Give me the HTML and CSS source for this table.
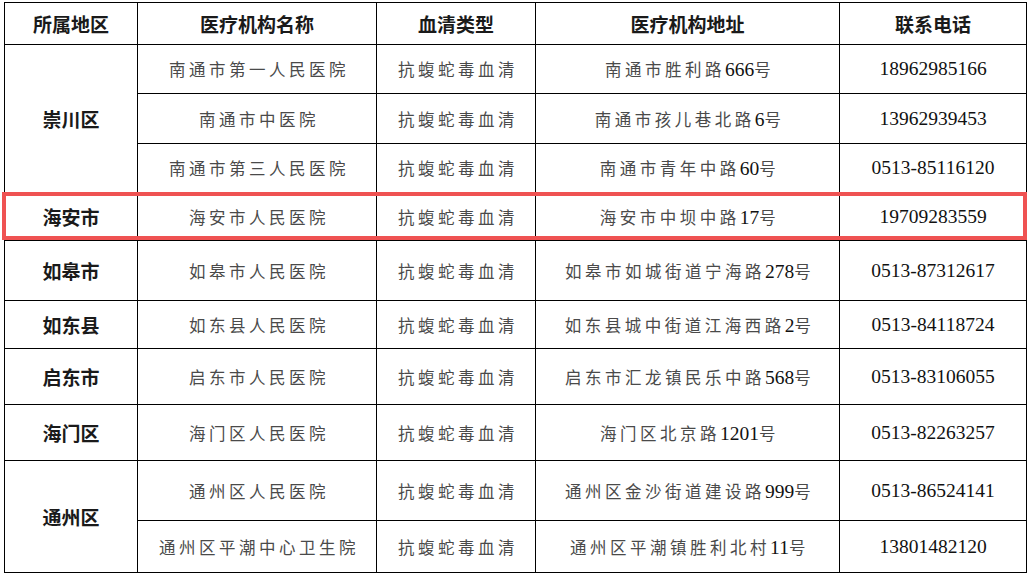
FILE: index.html
```html
<!DOCTYPE html>
<html lang="zh">
<head>
<meta charset="utf-8">
<link rel="stylesheet" href="styles.css">
</head>
<body>
<div class="wrap">
<table class="grid">
  <colgroup>
    <col class="c1"><col class="c2"><col class="c3"><col class="c4"><col class="c5">
  </colgroup>
  <thead>
    <tr class="h-head">
      <th>所属地区</th><th>医疗机构名称</th><th>血清类型</th><th>医疗机构地址</th><th class="tel">联系电话</th>
    </tr>
  </thead>
  <tbody>
    <tr class="h49">
      <td class="area" rowspan="3">崇川区</td>
      <td class="cn">南通市第一人民医院</td><td class="cn">抗蝮蛇毒血清</td><td class="cn">南通市胜利路<span class="num">666</span>号</td><td class="tel num">18962985166</td>
    </tr>
    <tr class="h50">
      <td class="cn">南通市中医院</td><td class="cn">抗蝮蛇毒血清</td><td class="cn">南通市孩儿巷北路<span class="num">6</span>号</td><td class="tel num">13962939453</td>
    </tr>
    <tr class="h49">
      <td class="cn">南通市第三人民医院</td><td class="cn">抗蝮蛇毒血清</td><td class="cn">南通市青年中路<span class="num">60</span>号</td><td class="tel num">0513-85116120</td>
    </tr>
    <tr class="h48">
      <td class="area">海安市</td>
      <td class="cn">海安市人民医院</td><td class="cn">抗蝮蛇毒血清</td><td class="cn">海安市中坝中路<span class="num">17</span>号</td><td class="tel num">19709283559</td>
    </tr>
    <tr class="h60">
      <td class="area">如皋市</td>
      <td class="cn">如皋市人民医院</td><td class="cn">抗蝮蛇毒血清</td><td class="cn">如皋市如城街道宁海路<span class="num">278</span>号</td><td class="tel num">0513-87312617</td>
    </tr>
    <tr class="h48">
      <td class="area">如东县</td>
      <td class="cn">如东县人民医院</td><td class="cn">抗蝮蛇毒血清</td><td class="cn">如东县城中街道江海西路<span class="num">2</span>号</td><td class="tel num">0513-84118724</td>
    </tr>
    <tr class="h56">
      <td class="area">启东市</td>
      <td class="cn">启东市人民医院</td><td class="cn">抗蝮蛇毒血清</td><td class="cn">启东市汇龙镇民乐中路<span class="num">568</span>号</td><td class="tel num">0513-83106055</td>
    </tr>
    <tr class="h56">
      <td class="area">海门区</td>
      <td class="cn">海门区人民医院</td><td class="cn">抗蝮蛇毒血清</td><td class="cn">海门区北京路<span class="num">1201</span>号</td><td class="tel num">0513-82263257</td>
    </tr>
    <tr class="h60">
      <td class="area" rowspan="2">通州区</td>
      <td class="cn">通州区人民医院</td><td class="cn">抗蝮蛇毒血清</td><td class="cn">通州区金沙街道建设路<span class="num">999</span>号</td><td class="tel num">0513-86524141</td>
    </tr>
    <tr class="h52">
      <td class="cn">通州区平潮中心卫生院</td><td class="cn">抗蝮蛇毒血清</td><td class="cn">通州区平潮镇胜利北村<span class="num">11</span>号</td><td class="tel num">13801482120</td>
    </tr>
  </tbody>
</table>
<div class="highlight"></div>
</div>
</body>
</html>
```

FILE: styles.css
```css
html, body {
  margin: 0;
  padding: 0;
  background: #ffffff;
}
.wrap {
  position: relative;
  width: 1029px;
  height: 576px;
  padding: 2px 0 0 4px;
  box-sizing: border-box;
}
.grid {
  border-collapse: collapse;
  table-layout: fixed;
  width: 1022px;
}
.c1 { width: 133px; }
.c2 { width: 239px; }
.c3 { width: 159px; }
.c4 { width: 304px; }
.c5 { width: 187px; }
.grid th, .grid td {
  border: 1px solid #000;
  padding: 0;
  text-align: center;
  vertical-align: middle;
  white-space: nowrap;
  overflow: hidden;
}
.grid th.tel, .grid td.tel {
  border-left: 1px dashed #8a8a8a;
}
.grid th {
  font-family: "Noto Sans CJK SC", "Noto Sans", sans-serif;
  font-weight: 700;
  font-size: 19px;
  color: #1a1a1a;
}
.h-head { height: 42px; }
.h48 { height: 48px; }
.h49 { height: 49px; }
.h50 { height: 50px; }
.h52 { height: 52px; }
.h56 { height: 56px; }
.h60 { height: 60px; }
.area {
  font-family: "Noto Sans CJK SC", "Noto Sans", sans-serif;
  font-weight: 700;
  font-size: 19px;
  color: #1a1a1a;
}
.grid td.cn {
  font-family: "Liberation Serif", "Noto Sans CJK SC", serif;
  font-size: 16.5px;
  letter-spacing: 3.5px;
  color: #4a4a4a;
  font-weight: 400;
  padding-left: 4px;
}
.num {
  font-family: "Liberation Serif", serif;
  font-size: 19.5px;
  letter-spacing: 0;
  color: #111;
}
.highlight {
  position: absolute;
  left: 2px;
  top: 192px;
  width: 1025px;
  height: 48px;
  box-sizing: border-box;
  border: 4px solid #ef5252;
  pointer-events: none;
}
```
